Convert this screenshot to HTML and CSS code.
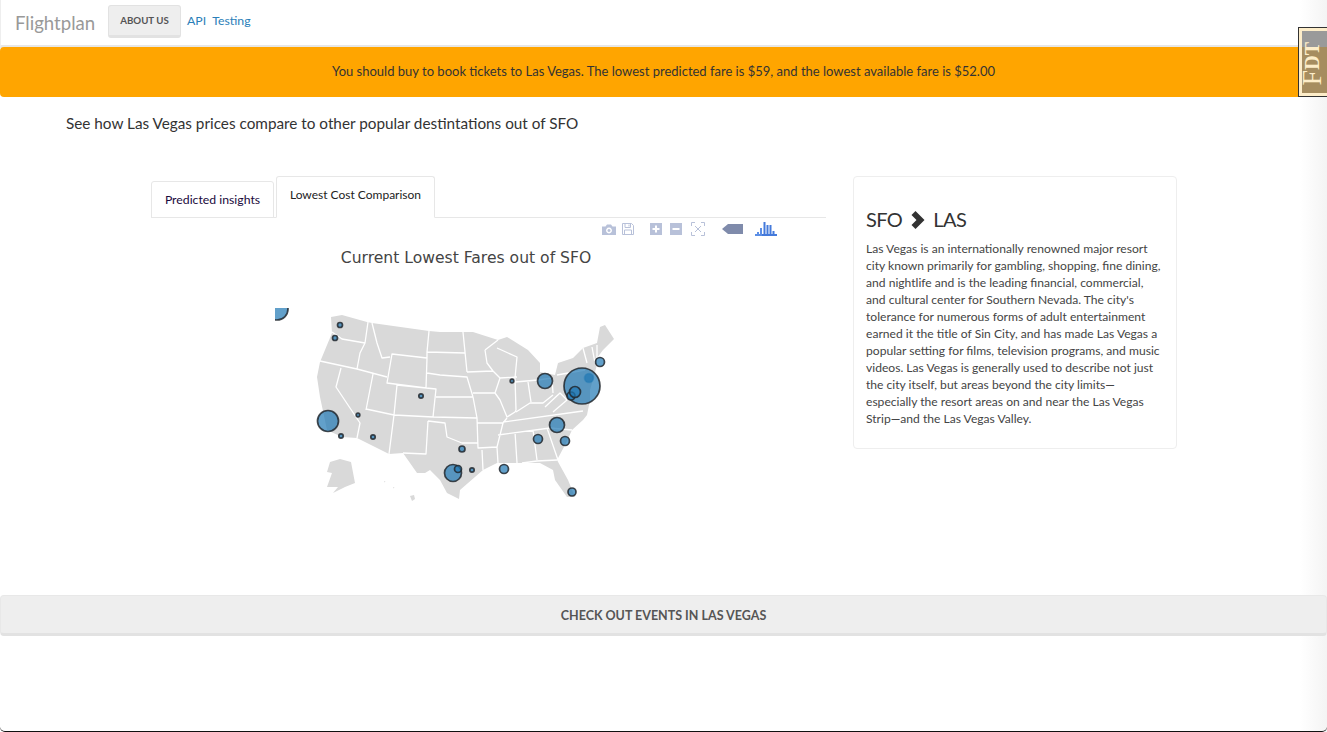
FILE: index.html
```html
<!DOCTYPE html>
<html lang="en">
<head>
<meta charset="utf-8">
<title>Flightplan</title>
<link rel="stylesheet" href="styles.css">
</head>
<body>
<nav class="navbar">
  <a class="brand" href="#">Flightplan</a>
  <a class="btn-about" href="#">ABOUT US</a>
  <a class="nav-link" href="#">API</a>
  <a class="nav-link" href="#">Testing</a>
</nav>
<div class="alert">You should buy to book tickets to Las Vegas. The lowest predicted fare is $59, and the lowest available fare is $52.00</div>
<a class="fdt" href="#"><span class="fdt-inner"><span class="fdt-text"><span class="fdt-big">F</span>DT</span></span></a>
<p class="lead">See how Las Vegas prices compare to other popular destintations out of SFO</p>
<main class="content">
  <section class="chart-col">
    <div class="tabs">
      <a class="tab" href="#">Predicted insights</a>
      <a class="tab tab-active" href="#">Lowest Cost Comparison</a>
    </div>
    <div class="plot">
      <div class="modebar">
        <svg class="mb mb-camera" viewBox="0 0 14 11"><path d="M0 2.500h3.500L5 .5h4l1.500 2H14V11H0z M7 3.600a2.900 2.900 0 1 0 .01 0z M7 5a1.500 1.500 0 1 1-.01 0z" fill-rule="evenodd"/></svg>
        <svg class="mb mb-save" viewBox="0 0 12 12"><path d="M.5.500h9l2 2v9H.5z M3 1v3.500h5.500V1 M7 1.500v2 M2.500 11.500V7h7v4.500" fill="none" stroke="currentColor"/></svg>
        <svg class="mb mb-plus" viewBox="0 0 12 12"><path d="M0 0h12v12H0z M5 2.500v2.500H2.500v2H5v2.500h2V7h2.500V5H7V2.500z" fill-rule="evenodd"/></svg>
        <svg class="mb mb-minus" viewBox="0 0 12 12"><path d="M0 0h12v12H0z M2.500 5v2h7V5z" fill-rule="evenodd"/></svg>
        <svg class="mb mb-auto" viewBox="0 0 14 14"><path d="M.5 4V.5H4 M10 .5h3.500V4 M13.500 10v3.500H10 M4 13.500H.5V10 M4 4l6 6 M10 4l-6 6" fill="none" stroke="currentColor"/></svg>
        <svg class="mb mb-tag" viewBox="0 0 21 10"><path d="M0 5L6 0h15v10H6z"/></svg>
        <svg class="mb mb-logo" viewBox="0 0 22 14"><path class="logo-light" d="M0 12h8v2H0z M2 10h2v3H2z M5 6h2v7H5z"/><path d="M7 12h15v2H7z M8.500 0h2v13h-2z M11.500 3h2v10h-2z M14.500 3h2v10h-2z M17.500 9h2v4h-2z"/></svg>
      </div>
      <svg class="map" viewBox="151 218 675 340" role="img">
        <defs>
          <clipPath id="geo"><rect x="275" y="308" width="345" height="200"/></clipPath>
        </defs>
        <text class="plot-title" x="466" y="262.500" text-anchor="middle">Current Lowest Fares out of SFO</text>
        <path class="land" d="M331 317L342 315L367 322L372 323L429 331L440 332L473 332L498 340L507 337L528 350L540 363L540 372L555 375L558 363L573 358L583 348L597 343L600 327L605 325L614 339L603 350L597 358L597 365L590 390L590 400L587 415L583 420L572 430L565 445L557 460L568 480L575 497L567 497L555 480L553 470L540 463L522 463L497 463L483 470L460 490L459 499L447 493L440 480L430 470L425 473L417 473L410 463L403 453L389 454L357 438L342 437L327 430L320 397L317 377L320 362L332 333Z"/>
        <path class="land" d="M330 462L340 459L351 462L355 483L345 487L333 493L338 487L327 487L332 473L327 472Z M410 496L414 495L415 499L412 501Z M393 487l1.500 .5-1 1z M384 481l1.500 .5-1 1z"/>
        <path class="borders" d="M332 332L342 339L365 343 M368 322L365 343L360 353L357 369 M320 361L357 369L387 377 M372 323L377 343L382 358L390 357 M392 354L427 358L426 388L387 383Z M429 331L427 352L427 358 M427 352L465 353 M427 373L440 375L467 377L473 397 M463 332L467 372 M341 368L336 387L360 423L357 438 M373 374L366 410 M397 385L394 415 M366 409L394 415L433 417 M397 385L436 389L433 417 M436 397L473 397 M394 415L389 454 M428 421L426 454L403 453 M433 417L477 418 M428 421L445 423L447 437L462 443L478 443 M473 397L477 418L478 448L497 447 M477 423L503 423L507 418 M503 423L497 447L498 463 M482 450L483 470 M467 372L493 371 M473 393L495 393 M493 371L500 378L495 393 M485 350L498 340 M485 350L487 363L493 371 M500 378L517 377 M497 348L517 357L515 378 M515 378L516 410 M495 393L500 400L507 417L515 412L516 410 M515 382L538 380 M528 382L531 402 M538 380L552 378 M552 378L553 393 M516 412L530 403L543 403L553 395 M545 407L560 393L567 400L553 412 M503 422L583 411 M498 435L550 428 M550 428L572 430 M547 428L558 460 M515 432L517 463 M533 430L537 460 M522 463L537 461L557 460 M557 375L585 370 M583 348L587 363 M592 347L595 363 M597 345L597 358"/>
        <g class="bubbles" clip-path="url(#geo)">
          <circle cx="277" cy="309" r="11"/>
          <circle cx="328" cy="421" r="10.500"/>
          <circle cx="341" cy="436" r="2.200"/>
          <circle cx="358" cy="415" r="1.800"/>
          <circle cx="373" cy="437" r="2.200"/>
          <circle cx="421" cy="396" r="2.200"/>
          <circle cx="340" cy="325" r="2.500"/>
          <circle cx="335" cy="338" r="2.500"/>
          <circle cx="512" cy="381" r="1.800"/>
          <circle cx="545" cy="381" r="7.500"/>
          <circle cx="582" cy="386" r="18"/>
          <circle cx="589" cy="378" r="4.500" class="bubble-inner"/>
          <circle cx="571" cy="396" r="4"/>
          <circle cx="575" cy="392" r="5.500"/>
          <circle cx="600" cy="362" r="4.500"/>
          <circle cx="557" cy="425" r="7.500"/>
          <circle cx="538" cy="439" r="4.500"/>
          <circle cx="565" cy="441" r="4.500"/>
          <circle cx="572" cy="492" r="4"/>
          <circle cx="504" cy="469" r="4.500"/>
          <circle cx="472" cy="470" r="2.200"/>
          <circle cx="462" cy="449" r="3"/>
          <circle cx="453" cy="473" r="8.500"/>
          <circle cx="458" cy="469" r="3.500"/>
        </g>
      </svg>
    </div>
  </section>
  <aside class="card">
    <h2 class="card-title">SFO <svg class="chevron" viewBox="0 0 14 18"><path d="M4 0l9 9-9 9-4-4 5-5-5-5z"/></svg> LAS</h2>
    <p class="card-text">Las Vegas is an internationally renowned major resort<br>city known primarily for gambling, shopping, fine dining,<br>and nightlife and is the leading financial, commercial,<br>and cultural center for Southern Nevada. The city's<br>tolerance for numerous forms of adult entertainment<br>earned it the title of Sin City, and has made Las Vegas a<br>popular setting for films, television programs, and music<br>videos. Las Vegas is generally used to describe not just<br>the city itself, but areas beyond the city limits—<br>especially the resort areas on and near the Las Vegas<br>Strip—and the Las Vegas Valley.</p>
  </aside>
</main>
<a class="btn-events" href="#">CHECK OUT EVENTS IN LAS VEGAS</a>
</body>
</html>
```
FILE: styles.css
```css
* { box-sizing: border-box; }
html, body { height: 100%; }
body {
  margin: 0;
  height: 732px;
  overflow: hidden;
  position: relative;
  font-family: "Lato", "Noto Sans", sans-serif;
  font-size: 13px;
  color: #333;
  background: linear-gradient(to right, #fff 1300px, #f4f4f4 1327px);
  border-bottom: 1px solid #111;
  border-radius: 0 0 5px 5px;
}
a { text-decoration: none; }

.navbar {
  height: 48px;
  padding-left: 15px;
  display: flex;
  align-items: flex-start;
  border: 1px solid #e7e7e7;
  border-width: 0 0 3px 1px;
  border-left-color: #eee;
}
.brand { font-size: 18.600px; color: #999; line-height: 46px; margin-left: -1px; width: 93px; }
.btn-about {
  margin-top: 5px;
  width: 73px;
  height: 33px;
  line-height: 29px;
  text-align: center;
  font-size: 9.700px;
  font-weight: 700;
  color: #555;
  background: #eee;
  border: 1px solid #e2e2e2;
  border-bottom-width: 3px;
  border-radius: 3px;
}
.nav-link { color: #2a80b9; font-size: 12.300px; line-height: 41px; margin-left: 6px; }

.alert {
  height: 50px;
  margin-top: -1px;
  background: #ffa500;
  border-radius: 4px;
  color: #333;
  font-size: 13px;
  line-height: 48px;
  text-align: center;
}

.fdt {
  position: absolute;
  top: 27px;
  right: 0;
  width: 29px;
  height: 70px;
  background: #fdedc9;
  border: 1px solid #333;
  border-right: 0;
  padding: 3px 0 3px 3px;
}
.fdt-inner {
  display: flex;
  width: 100%;
  height: 100%;
  padding-right: 5px;
  background-image: linear-gradient(#9a9a9a 0, #9a9a9a 16px, #a68d60 16px);
  align-items: center;
  justify-content: center;
}
.fdt-text {
  font-family: "Liberation Serif", serif;
  font-size: 20px;
  font-weight: 700;
  line-height: 20px;
  color: #fdedc9;
  writing-mode: vertical-rl;
  transform: rotate(180deg);
  white-space: nowrap;
  margin-top: 3px;
}
.fdt-big { font-size: 28px; font-weight: 400; }

.lead {
  margin: 0;
  padding: 17px 0 0 66px;
  height: 79px;
  font-size: 15.300px;
  color: #333;
}

.content {
  display: flex;
  align-items: flex-start;
  gap: 27px;
  padding-left: 151px;
  height: 420px;
}
.chart-col { width: 675px; flex: none; }
.tabs {
  display: flex;
  align-items: flex-end;
  gap: 2px;
  height: 42px;
  border-bottom: 1px solid #e7e7e7;
}
.tab {
  display: block;
  width: 123px;
  height: 37px;
  margin-bottom: -1px;
  line-height: 36px;
  text-align: center;
  font-size: 12.250px;
  color: #1a0a3c;
  background: #fff;
  border: 1px solid #e7e7e7;
  border-radius: 3px 3px 0 0;
}
.tab-active {
  width: 159px;
  height: 42px;
  line-height: 36px;
  font-size: 12px;
  color: #222;
  border-bottom-color: #fff;
}
.plot { position: relative; height: 340px; }
.map { display: block; width: 675px; height: 340px; }
.plot-title {
  font-family: "DejaVu Sans", sans-serif;
  font-size: 15.600px;
  fill: #444;
}
.land { fill: #d9d9d9; }
.borders { fill: none; stroke: #fff; stroke-width: 1.300; stroke-linejoin: round; }
.bubbles circle {
  fill: #1f77b4;
  fill-opacity: 0.7;
  stroke: #22282e;
  stroke-width: 1.700;
  stroke-opacity: 0.85;
}
.bubbles .bubble-inner { stroke: #1f77b4; stroke-opacity: 0.4; }

.modebar {
  position: absolute;
  top: 6px;
  left: 451px;
  display: flex;
  align-items: flex-start;
  color: #b8c1d9;
  fill: #b8c1d9;
}
.mb { display: block; flex: none; }
.mb-camera { width: 14px; height: 11px; }
.mb-save { width: 12px; height: 12px; margin-left: 6px; margin-top: -1px; }
.mb-plus { width: 12px; height: 12px; margin-left: 16px; margin-top: -1px; }
.mb-minus { width: 12px; height: 12px; margin-left: 8px; margin-top: -1px; }
.mb-auto { width: 14px; height: 14px; margin-left: 9px; margin-top: -2px; }
.mb-tag { width: 21px; height: 10px; margin-left: 17px; fill: #7f8bab; }
.mb-logo { width: 22px; height: 14px; margin-left: 12px; margin-top: -2px; fill: #447adb; }
.logo-light { fill: #5c8fe6; }

.card {
  width: 324px;
  height: 273px;
  padding: 27px 12px 0;
  border: 1px solid #eee;
  border-radius: 4px;
  flex: none;
}
.card-title {
  margin: 0 0 6px;
  font-size: 20px;
  font-weight: 400;
  letter-spacing: -0.6px;
  line-height: 30px;
  color: #333;
}
.chevron { width: 15px; height: 18px; fill: #333; vertical-align: -2px; margin: 0 3px 0 4px; }
.card-text {
  margin: 0;
  font-size: 12.100px;
  line-height: 17px;
  color: #444;
}

.btn-events {
  display: block;
  height: 41px;
  margin-top: -1px;
  line-height: 40px;
  text-align: center;
  font-size: 12.500px;
  font-weight: 700;
  color: #555;
  background: #eee;
  border: 1px solid #e8e8e8;
  border-bottom: 3px solid #e2e2e2;
  border-radius: 4px;
}
```
